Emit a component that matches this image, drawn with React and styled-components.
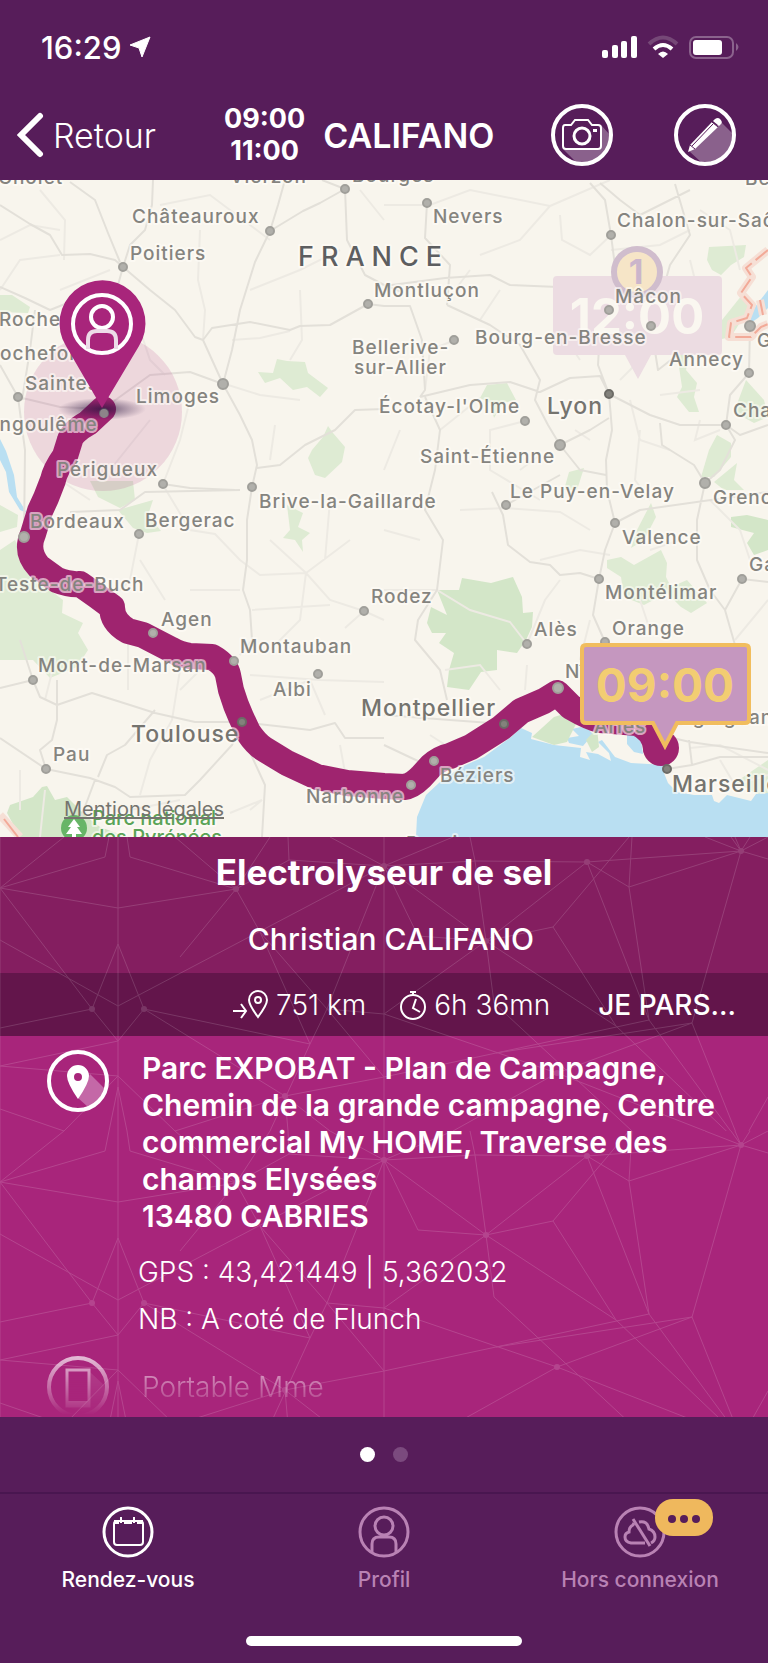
import styled, { createGlobalStyle } from "styled-components";

const cities = [
  { name: "Cholet", x: -2, y: 184 },
  { name: "Vierzon", x: 230, y: 183 },
  { name: "Bourges", x: 352, y: 182 },
  { name: "Besançon", x: 745, y: 185 },
  { name: "Châteauroux", x: 132, y: 223 },
  { name: "Nevers", x: 433, y: 223 },
  { name: "Chalon-sur-Saône", x: 617, y: 227 },
  { name: "Poitiers", x: 130, y: 260 },
  { name: "Montluçon", x: 374, y: 297 },
  { name: "Mâcon", x: 615, y: 303 },
  { name: "Rochelle", x: -1, y: 326 },
  { name: "Bourg-en-Bresse", x: 475, y: 344 },
  { name: "Genève", x: 757, y: 347 },
  { name: "Bellerive-", x: 352, y: 354 },
  { name: "sur-Allier", x: 354, y: 374 },
  { name: "Rochefort", x: -13, y: 360 },
  { name: "Annecy", x: 669, y: 366 },
  { name: "Saintes", x: 25, y: 390 },
  { name: "Limoges", x: 136, y: 403 },
  { name: "Écotay-l'Olme", x: 379, y: 413 },
  { name: "Chambéry", x: 733, y: 417 },
  { name: "Angoulême", x: -15, y: 431 },
  { name: "Saint-Étienne", x: 420, y: 463 },
  { name: "Périgueux", x: 57, y: 476 },
  { name: "Le Puy-en-Velay", x: 510, y: 498 },
  { name: "Grenoble", x: 713, y: 504 },
  { name: "Brive-la-Gaillarde", x: 259, y: 508 },
  { name: "Bordeaux", x: 30, y: 528 },
  { name: "Bergerac", x: 145, y: 527 },
  { name: "Valence", x: 622, y: 544 },
  { name: "Gap", x: 749, y: 571 },
  { name: "Teste-de-Buch", x: -5, y: 591 },
  { name: "Montélimar", x: 605, y: 599 },
  { name: "Rodez", x: 371, y: 603 },
  { name: "Agen", x: 161, y: 626 },
  { name: "Orange", x: 612, y: 635 },
  { name: "Alès", x: 534, y: 636 },
  { name: "Montauban", x: 240, y: 653 },
  { name: "Mont-de-Marsan", x: 38, y: 672 },
  { name: "Nîmes", x: 565, y: 678 },
  { name: "Albi", x: 273, y: 696 },
  { name: "Draguignan", x: 658, y: 724 },
  { name: "Arles", x: 594, y: 733 },
  { name: "Pau", x: 53, y: 761 },
  { name: "Béziers", x: 440, y: 782 },
  { name: "Narbonne", x: 306, y: 803 },
  { name: "Perpignan", x: 406, y: 850 },
];

const bigCities = [
  { name: "Lyon", x: 547, y: 414 },
  { name: "Montpellier", x: 361, y: 716 },
  { name: "Toulouse", x: 131, y: 742 },
  { name: "Marseille", x: 672, y: 792 },
];

// x, y, radius, dark
const dots = [
  [345, 189, 4], [270, 231, 4], [123, 267, 4], [368, 304, 4], [223, 384, 5],
  [18, 397, 4], [104, 413, 4], [163, 484, 4], [252, 487, 4], [427, 203, 4],
  [611, 235, 4], [609, 310, 4], [651, 326, 4], [454, 340, 4], [750, 326, 5],
  [749, 373, 4], [609, 394, 4, 1], [525, 421, 4], [560, 445, 5], [726, 425, 4],
  [705, 483, 5], [24, 537, 5], [139, 534, 4], [153, 633, 4], [234, 661, 4],
  [318, 674, 4], [33, 680, 4], [242, 722, 4, 1], [46, 769, 4], [364, 611, 4],
  [506, 505, 4], [615, 523, 4], [599, 579, 4], [742, 579, 4], [527, 644, 4],
  [605, 642, 4], [558, 688, 5], [504, 724, 4, 1], [434, 761, 4], [411, 785, 4],
  [667, 769, 4, 1],
];

const forests = [
  "0,295 12,295 30,307 28,313 0,312",
  "277,359 287,361 305,362 308,373 328,388 320,397 307,387 293,390 280,378 265,383 258,372 273,373",
  "328,426 333,433 345,447 342,462 325,478 315,475 308,458 312,450 323,437",
  "90,481 133,481 135,500 120,508 98,497",
  "118,510 153,500 148,515 161,531 147,533 133,528",
  "287,505 303,513 298,527 310,533 302,540 303,552 295,540 283,538 290,530",
  "0,550 15,540 30,570 50,590 63,600 62,613 83,623 78,633 88,650 77,667 50,678 33,660 0,660",
  "0,505 18,515 17,527 0,532",
  "651,503 656,517 644,540 631,548 637,530",
  "607,560 621,557 634,565 661,550 667,563 666,577 671,587 687,580 707,603 691,613 681,607 667,593 644,605 624,597 621,577 607,568",
  "709,247 746,245 744,257 731,265 721,275 712,270 707,260",
  "742,295 752,303 731,337 717,340 712,333 722,320",
  "677,347 692,345 686,370 697,383 694,397 699,412 689,412 677,397 682,387 679,367",
  "746,380 764,400 768,417 754,423 734,412",
  "717,435 731,443 731,457 714,477 701,477 709,450",
  "737,463 734,480 744,490 724,490 714,482",
  "487,385 507,383 516,400 503,403 494,418 490,403 480,398",
  "584,468 577,490 564,490 569,472",
  "736,782 768,760 768,800 750,790",
];

const parks = [
  "462,578 491,583 513,577 522,597 523,613 533,612 532,627 526,640 517,653 497,650 497,670 481,672 469,690 447,687 449,670 454,653 439,643 446,633 432,633 427,623 431,607 447,615 437,590 459,590",
  "7,813 10,805 33,797 42,787 47,786 55,800 67,797 87,817 100,827 127,837 20,837",
  "731,517 747,515 768,520 768,550 754,555 747,543 754,533 731,527",
  "532,737 554,717 567,713 577,722 567,742 554,745",
  "597,728 599,747 592,752 586,740",
];

const roads = `
  M0 205L30 224L50 235L62 255L90 254L115 260L123 267
  M153 180L152 205L145 230L130 245L123 267L118 285L100 290L50 310L25 298L0 287
  M70 182L95 200L108 233L120 262
  M123 267L150 290L175 310L195 337L203 340L223 384
  M285 180L278 205L270 231L255 262L250 278L240 310L232 350L223 384L240 415L252 440L257 465L252 487
  M270 231L303 211L320 203L345 189L322 180M345 189L347 240L365 275L384 285L402 292
  M203 340L212 328L250 322L290 330L300 326L330 325L368 304L384 306L410 306L422 340L425 390L420 397
  M257 468L280 465L305 445L335 430L355 410L384 409
  M163 484L190 488L235 490M252 487L247 520L247 560L243 590L250 610L252 640L240 655
  M18 397L60 407L103 409L150 375L190 372L223 384
  M0 365L18 397L25 450L24 537M35 310L30 350L22 400
  M427 203L425 238L450 265L447 305M384 286L445 278L490 275L510 285L558 287L580 305L609 310L651 326
  M447 305L490 325L520 345L540 380L535 400L548 425L560 445
  M420 397L470 385L510 382L540 392L570 378L600 376L609 394
  M590 183L605 200L611 235L618 290L600 330L598 365L609 394L612 430L606 460L607 490L615 523L605 550L599 579L593 615L605 642
  M675 184L690 235L670 265L660 300L651 326L658 370L690 345L720 330
  M609 394L650 415L680 425L726 425L740 435L768 425
  M560 445L590 430L609 418M660 423L662 445L694 465L705 483L720 470L735 440L726 425L730 395L749 373L750 326
  M560 445L580 470L606 475M506 505L533 490L560 475
  M425 397L440 430L435 470L425 510L443 540L437 590L418 620L415 640L440 670L447 700
  M492 492L503 515L508 545L530 562L550 565L560 575L580 573L599 579M615 523L640 510L768 492
  M705 483L697 520L697 560L710 590L725 610L735 645M742 579L725 610M742 579L768 582
  M504 724L450 720L384 715M384 745L420 762M660 735L690 742L768 753M689 740L692 765L667 769M692 765L720 757L768 757
  M0 688L33 680L40 697L57 705L92 693L130 705L155 713L195 722L242 722L285 727L310 730L335 723L345 738L384 738
  M57 680L57 720L52 740L40 750L46 769M0 738L46 769L90 778L115 787L130 797L185 795L200 780L232 745L242 722
  M95 780L80 820M98 777L107 755L125 745L155 710M242 735L265 785L262 837M33 680L20 640
  M70 512L120 510L145 492L240 490M600 183L620 200L640 215L690 190
`;

const minorRoads = `
  M0 240L30 225L60 230M40 190L65 220L64 260M0 290L20 260L60 255M60 290L110 270M160 205L210 195L270 240
  M200 230L198 280L205 310L203 340M250 290L300 270L340 250M300 290L302 340L290 360M232 340L260 338L290 331
  M130 300L150 360L165 375M360 190L384 220M384 205L430 205L470 190L550 206M550 206L520 240L480 255M550 206L610 180
  M560 215L562 240L590 255L611 235M470 270L455 290M500 290L480 320M611 250L660 245L690 230M700 210L730 230L740 270
  M690 260L700 300L705 330M560 300L555 340L590 350M455 340L430 350L425 390M480 398L440 430M525 421L490 430L490 470L540 500
  M560 330L580 360M630 400L640 440L670 450M660 395L700 390M640 360L620 380M400 430L384 470M300 400L260 395L225 384
  M275 425L270 460M150 420L110 470M163 484L180 440L190 400M60 480L90 500M139 534L130 580L110 600
  M163 485L190 530L215 534L240 560L260 575L306 573L350 540M140 560L165 600M190 590L240 590M306 573L330 600L364 611L384 620
  M270 540L306 573L300 620L270 650M252 610L330 605M330 500L325 560M384 530L420 540M364 611L345 628M250 675L320 680L384 682
  M260 700L310 680L325 715M128 640L128 690M180 670L172 720L150 760L140 795M205 665L180 690M45 700L55 660M20 770L20 810
  M45 790L40 837M130 810L180 800M250 810L262 800L230 813M340 745L350 800M384 590L437 590L470 610L510 622L527 644
  M445 670L480 665L500 690M527 644L545 600L560 580M460 510L506 508L560 512L590 530M540 560L580 550L610 555M640 600L650 630
  M768 600L735 640M710 500L740 530L750 560M650 550L680 540M590 620L580 660M527 665L525 690M605 642L600 660M690 748L720 745L768 770
  M720 760L735 785L768 775M430 735L450 748M700 420L695 440L720 430M640 430L635 480L650 500M590 440L575 430M540 455L520 470
`;

const route =
  "M103 409L88 423Q72 432 70 440L65 456Q55 470 53 480L46 498L40 511L33 534Q25 552 39 567L57 580Q70 585 80 584L97 596L112 607Q112 622 128 631L143 635L170 649Q180 655 190 656L212 657Q226 665 228 675L231 690L236 705L241 717L248 732Q256 744 264 749L287 763L317 777L347 783L384 786L404 787Q412 786 421 777L431 766Q440 758 450 756L471 747L501 728L521 711L544 701L557 693L571 707Q590 718 600 720L637 723Q654 730 656 748";

const mesh = `
  M0 0V294M118 0V294M384 0V294
  M0 51L64 0M0 51L105 20L109 0M127 0L130 20L236 52M0 51L118 71L236 52L289 23L384 29M289 23L288 0
  M0 51L92 172M0 103L118 169L384 29M118 107L92 172L118 204L144 172L118 107M92 172L0 191
  M144 172L310 207L260 95L236 52L270 0M236 52L175 0M236 52L180 120M260 95L327 172L384 177L486 104M384 29L327 172L310 207L270 294
  M384 29L418 99L486 104L553 90L629 0M384 29L475 24L587 25L741 14M384 29L486 104M475 24L486 104L616 189L553 90
  M587 25L486 104L494 166L632 294M587 25L629 50L741 14M629 50L649 183L587 25M741 14L692 186L741 308
  M384 29L330 0M384 29L453 0M475 24L470 0M629 50L632 0
  M384 240L496 216L649 183L741 308M692 186L557 236L384 177M557 236L453 294M557 236L741 308M616 189L741 308M692 186L496 216
  M144 172L285 259L384 240L327 172M285 259L330 294M285 259L288 294M285 259L175 294L118 239L64 294L0 272M118 239L0 229
  M118 204L0 229M118 250L109 294M118 250L127 294
  M741 14L705 0M741 14L731 0M741 14L735 0M741 14L750 0M741 14L768 0M741 14L768 22
  M741 308L768 260
`;

const meshNodes = [[92, 172], [144, 172], [236, 52], [384, 29], [486, 104], [557, 236], [587, 25], [741, 14], [285, 259]];

function TopoMap() {
  return (
    <MapSvg viewBox="0 180 768 657" role="img" aria-label="Itinéraire vers Marseille">
      <defs>
        <radialGradient id="shade">
          <stop offset="0" stopColor="#2b1640" stopOpacity=".75" />
          <stop offset=".5" stopColor="#2b1640" stopOpacity=".35" />
          <stop offset="1" stopColor="#2b1640" stopOpacity="0" />
        </radialGradient>
      </defs>
      <rect y="180" width="768" height="657" fill="#f8f5ed" />
      <g fill="#deebd3">{forests.map((p) => <polygon key={p} points={p} />)}</g>
      <g fill="#b9dff2">
        <path d="M416 837L417 817L426 795L440 782L461 767L484 757L511 737L521 728L532 733L531 739L554 745L581 748L580 757L590 760L586 752L598 754L611 761L609 753L598 742L602 740L615 757L631 763L666 765L664 773L668 783L677 792L694 795L712 795L714 801L719 803L727 795L751 801L756 794L768 793V837Z" />
        <path d="M567 738L579 736L572 729L581 727L589 730L597 738L589 739L583 746L569 743ZM627 735L640 733L643 754L634 752L627 744Z" />
        <path d="M0 439L6 451L14 475L17 497L27 513L20 510L9 492L6 472L0 460Z" />
        <path d="M768 290L752 311L749 324L758 318L768 308Z" />
      </g>
      <g fill="#d3e6c8">{parks.map((p) => <polygon key={p} points={p} />)}</g>
      <path d={minorRoads} fill="none" stroke="#edeae3" strokeWidth="2" />
      <path d={roads} fill="none" stroke="#e3e0d9" strokeWidth="2" strokeLinejoin="round" />
      <g fill="none" strokeLinejoin="round">
        <path d="M768 250L746 268L752 277L741 293L752 305L747 318L731 323L729 337L751 337L761 327L768 324M760 300L763 315M0 815L20 837" stroke="#f6dfd5" strokeWidth="8" />
        <path d="M768 250L746 268L752 277L741 293L752 305L747 318L731 323L729 337L751 337L761 327L768 324M760 300L763 315" stroke="#f2aa98" strokeWidth="2" strokeDasharray="16 5" />
        <path d="M4 819L18 837" stroke="#f2aa98" strokeWidth="2" />
      </g>

      <path d={route} fill="none" stroke="#9f246f" strokeWidth="26" strokeLinecap="round" strokeLinejoin="round" />
      <circle cx="661" cy="748" r="18" fill="#9f246f" />
      <circle cx="103" cy="412" r="79" fill="#a8257b" fillOpacity=".14" />

      {/* previous appointment, dimmed */}
      <path d="M557 276H718Q722 276 722 280V351Q722 355 718 355H651L638 379L625 355H557Q553 355 553 351V280Q553 276 557 276Z" fill="#ecdce2" />
      <BubbleText x="637" y="334" $color="#faf7f0" $wide>12:00</BubbleText>
      <circle cx="637" cy="272" r="23" fill="#f6e5c7" stroke="#d0bdcd" strokeWidth="6" />
      <StepText x="636" y="284">1</StepText>

      <g strokeWidth="2">
        {dots.map(([x, y, r, dark]) => (
          <circle key={`${x}-${y}`} cx={x} cy={y} r={r} fill={dark ? "#83827c" : "#b1b0ab"} stroke={dark ? "#6c6b66" : "#a09f9a"} />
        ))}
      </g>
      {cities.map((c) => <CityLabel key={c.name} x={c.x} y={c.y}>{c.name}</CityLabel>)}
      {bigCities.map((c) => <CityLabel key={c.name} x={c.x} y={c.y} $big>{c.name}</CityLabel>)}
      <CountryLabel x="298" y="266">FRANCE</CountryLabel>

      <circle cx="74" cy="828" r="13" fill="#67b567" />
      <path d="M74 819L80 827H77L82 834H76V838H72V834H66L71 827H68Z" fill="#fff" />
      <ParkLabel x="92" y="825">Parc national</ParkLabel>
      <ParkLabel x="92" y="844">des Pyrénées</ParkLabel>

      <ellipse cx="102" cy="409" rx="44" ry="11" fill="url(#shade)" />
      <path d="M102 408L66 346A43 43 0 1 1 139 346Z" fill="#a8257b" />
      <circle cx="104" cy="413" r="4" fill="#8d8489" />
      <g fill="none" stroke="#fff" strokeWidth="4">
        <circle cx="102" cy="324" r="29" />
        <circle cx="102" cy="317" r="11" />
        <path d="M88 349V340Q88 331 97 331H107Q116 331 116 340V349" stroke="#eddbe8" />
      </g>

      {/* current destination */}
      <path d="M586 645H745Q749 645 749 649V719Q749 723 745 723H677L665 746L653 723H586Q582 723 582 719V649Q582 645 586 645Z" fill="#c597bf" stroke="#f1bd5e" strokeWidth="4" />
      <BubbleText x="665" y="702" $color="#f2cd72">09:00</BubbleText>
    </MapSvg>
  );
}

function Mesh() {
  return (
    <MeshSvg aria-hidden="true">
      <defs>
        <pattern id="mesh" width="768" height="294" patternUnits="userSpaceOnUse">
          <path d={mesh} fill="none" stroke="#fff" strokeWidth="1" />
          {meshNodes.map(([x, y]) => <circle key={`${x}-${y}`} cx={x} cy={y} r="3" fill="#fff" />)}
        </pattern>
      </defs>
      <rect width="100%" height="100%" fill="url(#mesh)" />
    </MeshSvg>
  );
}

function CameraIcon() {
  return (
    <svg width="62" height="62" viewBox="0 0 62 62" fill="none">
      <path d="M50 21L59 31A28 28 0 0 1 26 59L12 45H50Z" fill="#8a618c" />
      <circle cx="31" cy="31" r="29" stroke="#fff" strokeWidth="4" />
      <path d="M14 21H20L24 16H37L41 21H47Q50 21 50 24V42Q50 45 47 45H15Q12 45 12 42V24Q12 21 14 21Z" stroke="#fff" strokeWidth="2" fill="#571d5a" />
      <circle cx="31" cy="32" r="8" stroke="#fff" strokeWidth="3" />
      <path d="M42 25H46V28H42Z" fill="#fff" />
    </svg>
  );
}

function PencilIcon() {
  return (
    <svg width="62" height="62" viewBox="0 0 62 62" fill="none">
      <path d="M47 18L58 29A28 28 0 0 1 28 59L15 47Z" fill="#8a618c" />
      <circle cx="31" cy="31" r="29" stroke="#fff" strokeWidth="4" />
      <path d="M14 48L16 41L38 18L44 23L21 45Z" fill="#fff" />
      <path d="M39 17L41 15Q44 13 46 15Q49 18 47 20L45 22Z" fill="#fff" />
      <path d="M39 20L18 42M38 18L44 23M16 41L21 45" stroke="#571d5a" strokeWidth="1" />
    </svg>
  );
}

function PlaceIcon() {
  return (
    <svg width="62" height="62" viewBox="0 0 62 62" fill="none">
      <path d="M43 24L57 38A28 28 0 0 1 41 57L31 48Z" fill="#c468a7" />
      <circle cx="31" cy="31" r="29" stroke="#fff" strokeWidth="4" />
      <path d="M31 49Q20 33 20 26A11 11 0 0 1 42 26Q42 33 31 49ZM31 23A4 4 0 1 0 31 31A4 4 0 1 0 31 23Z" fill="#fff" fillRule="evenodd" />
    </svg>
  );
}

function PhoneIcon() {
  return (
    <svg width="62" height="62" viewBox="0 0 62 62" fill="none">
      <path d="M43 16L58 30A28 28 0 0 1 40 58L20 51Z" fill="#fff" fillOpacity=".2" />
      <circle cx="31" cy="31" r="29" stroke="#fff" strokeWidth="4" />
      <path d="M20 14H42V50H20Z" stroke="#fff" strokeWidth="3" fill="#a8257b" />
      <path d="M20 45H42V50H20Z" fill="#fff" />
    </svg>
  );
}

function DistanceIcon() {
  return (
    <svg width="36" height="30" viewBox="0 0 36 30" fill="none" stroke="#fff" strokeWidth="2">
      <path d="M1 21H13M9 14L14 21L9 28" />
      <path d="M26 27Q17 15 17 10A9 9 0 0 1 35 10Q35 15 26 27Z" />
      <circle cx="26" cy="10" r="3" />
    </svg>
  );
}

function TimerIcon() {
  return (
    <svg width="26" height="30" viewBox="0 0 26 30" fill="none" stroke="#fff" strokeWidth="2">
      <circle cx="13" cy="17" r="12" />
      <path d="M13 5V2M10 2H16M16 9L13 18L20 22" />
    </svg>
  );
}

function CalendarIcon() {
  return (
    <svg width="52" height="52" viewBox="0 0 52 52" fill="none" stroke="currentColor">
      <circle cx="26" cy="26" r="24" strokeWidth="3" />
      <rect x="12" y="15" width="29" height="24" rx="3" strokeWidth="2" />
      <path d="M12 16H17M22 16H30M35 16H41" strokeWidth="4" />
      <path d="M19 11V17M32 11V17" strokeWidth="2" />
    </svg>
  );
}

function ProfileIcon() {
  return (
    <svg width="52" height="52" viewBox="0 0 52 52" fill="none" stroke="currentColor" strokeWidth="3">
      <circle cx="26" cy="26" r="24" />
      <circle cx="26" cy="20" r="9" />
      <path d="M14 46V38Q14 31 21 31H31Q38 31 38 38V46" />
    </svg>
  );
}

function OfflineIcon() {
  return (
    <svg width="52" height="52" viewBox="0 0 52 52" fill="none" stroke="currentColor" strokeWidth="3">
      <circle cx="26" cy="26" r="24" />
      <path d="M31 37H17Q11 36 11 31Q11 27 15 26Q15 21 19 19L20 17M25 16Q33 14 35 23Q41 25 41 31Q41 35 37 37" />
      <path d="M19 13L36 40" />
    </svg>
  );
}

export default function App() {
  return (
    <>
      <GlobalStyle />
      <Screen>
        <StatusBar>
          <Clock>16:29</Clock>
          <svg width="22" height="22" viewBox="0 0 22 22">
            <path d="M1 9L21 1L13 21L10 12Z" fill="#fff" stroke="#fff" strokeLinejoin="round" />
          </svg>
          <StatusIcons width="137" height="24" viewBox="0 0 137 24">
            <g fill="#fff">
              <rect y="15" width="6" height="8" rx="2" />
              <rect x="10" y="10" width="6" height="13" rx="2" />
              <rect x="19" y="6" width="6" height="17" rx="2" />
              <rect x="29" y="1" width="6" height="22" rx="2" />
              <path d="M61 23L56 19Q61 14 66 19Z" />
              <rect x="91" y="5" width="29" height="15" rx="3" />
            </g>
            <path d="M52 14Q61 6 70 14" fill="none" stroke="#fff" strokeWidth="4" />
            <path d="M47 9Q61 -4 75 9" fill="none" stroke="#754877" strokeWidth="4" />
            <rect x="88" y="2" width="43" height="21" rx="6" fill="none" stroke="#8b638d" strokeWidth="2" />
            <path d="M134 8Q139 12 134 16Z" fill="#8b638d" />
          </StatusIcons>
        </StatusBar>

        <NavBar>
          <BackButton>
            <svg width="27" height="46" viewBox="0 0 27 46" fill="none" stroke="#fff" strokeWidth="6" strokeLinecap="round">
              <path d="M23 4L4 23L23 42" strokeLinejoin="miter" />
            </svg>
            Retour
          </BackButton>
          <Slot>
            <time>09:00</time>
            <time>11:00</time>
          </Slot>
          <ClientName>CALIFANO</ClientName>
          <Actions>
            <IconButton aria-label="Prendre une photo"><CameraIcon /></IconButton>
            <IconButton aria-label="Modifier"><PencilIcon /></IconButton>
          </Actions>
        </NavBar>

        <MapArea>
          <TopoMap />
          <LegalLink href="#legal">Mentions légales</LegalLink>
        </MapArea>

        <Panel>
          <Mesh />
          <Summary>
            <Title>Electrolyseur de sel</Title>
            <Contact>Christian CALIFANO</Contact>
          </Summary>
          <TripBar>
            <Stat><DistanceIcon />751 km</Stat>
            <Stat><TimerIcon />6h 36mn</Stat>
            <LeaveButton>JE PARS...</LeaveButton>
          </TripBar>
          <Details>
            <DetailRow>
              <PlaceIcon />
              <Address>
                Parc EXPOBAT - Plan de Campagne, Chemin de la grande campagne, Centre commercial My HOME, Traverse des champs Elysées
                <br />
                13480 CABRIES
              </Address>
            </DetailRow>
            <Note>GPS : 43,421449 | 5,362032</Note>
            <Note>NB : A coté de Flunch</Note>
            <FadedRow>
              <PhoneIcon />
              <span>Portable Mme</span>
            </FadedRow>
          </Details>
        </Panel>

        <Pager>
          <PageDot $active aria-label="Page 1" />
          <PageDot aria-label="Page 2" />
        </Pager>

        <TabBar>
          <Tab href="#rendez-vous" $active>
            <CalendarIcon />
            Rendez-vous
          </Tab>
          <Tab href="#profil">
            <ProfileIcon />
            Profil
          </Tab>
          <Tab href="#hors-connexion">
            <BadgeAnchor>
              <OfflineIcon />
              <Badge><i /><i /><i /></Badge>
            </BadgeAnchor>
            Hors connexion
          </Tab>
        </TabBar>
        <HomeArea><HomeIndicator /></HomeArea>
      </Screen>
    </>
  );
}

const GlobalStyle = createGlobalStyle`
  * {
    box-sizing: border-box;
  }

  body {
    margin: 0;
    background: #571d5a;
    color: white;
    font-family: Inter, "Liberation Sans", sans-serif;
  }

  button {
    padding: 0;
    border: none;
    background: transparent;
    color: inherit;
    font-family: inherit;
    cursor: pointer;
  }

  svg {
    display: block;
    flex: none;
  }
`;

const Screen = styled.div`
  display: flex;
  flex-direction: column;
  background: #571d5a;
`;

const StatusBar = styled.div`
  display: flex;
  align-items: center;
  gap: 8px;
  height: 94px;
  padding: 0 29px 0 41px;
`;

const Clock = styled.span`
  font-size: 31px;
  font-weight: 500;
`;

const StatusIcons = styled.svg`
  margin-left: auto;
`;

const NavBar = styled.header`
  display: flex;
  align-items: center;
  height: 86px;
  padding: 0 32px 4px 17px;
`;

const BackButton = styled.button`
  display: flex;
  align-items: center;
  gap: 9px;
  margin-right: 68px;
  font-size: 34px;
  font-weight: 300;
`;

const Slot = styled.div`
  display: flex;
  flex-direction: column;
  align-items: center;
  font-size: 27px;
  font-weight: 700;
  line-height: 32px;
`;

const ClientName = styled.h1`
  margin: 0 0 0 18px;
  font-size: 34px;
  font-weight: 600;
`;

const Actions = styled.div`
  display: flex;
  gap: 61px;
  margin-left: auto;
`;

const IconButton = styled.button`
  border-radius: 50%;
`;

const MapArea = styled.section`
  position: relative;
  overflow: hidden;
`;

const MapSvg = styled.svg`
  width: 100%;
  height: auto;
`;

const CityLabel = styled.text`
  font-size: ${(p) => (p.$big ? 23 : 19)}px;
  font-weight: 500;
  letter-spacing: 1px;
  fill: ${(p) => (p.$big ? "#75746f" : "#85847f")};
  stroke: rgba(255, 253, 248, 0.6);
  stroke-width: 4px;
  stroke-linejoin: round;
  paint-order: stroke;
`;

const CountryLabel = styled(CityLabel)`
  font-size: 27px;
  letter-spacing: 7px;
  fill: #5d5e60;
`;

const ParkLabel = styled(CityLabel)`
  font-size: 20px;
  letter-spacing: 0;
  fill: #5aa356;
`;

const BubbleText = styled.text`
  font-size: ${(p) => (p.$wide ? 49 : 46)}px;
  font-weight: 700;
  text-anchor: middle;
  fill: ${(p) => p.$color};
`;

const StepText = styled(BubbleText)`
  font-size: 34px;
  fill: #cbb5cb;
`;

const LegalLink = styled.a`
  position: absolute;
  left: 64px;
  bottom: 16px;
  color: #75746f;
  font-size: 20px;
  line-height: 24px;
`;

const Panel = styled.main`
  position: relative;
  background: #a8257b;
`;

const MeshSvg = styled.svg`
  position: absolute;
  inset: 0;
  width: 100%;
  height: 100%;
  opacity: 0.14;
`;

const Summary = styled.div`
  display: flex;
  flex-direction: column;
  align-items: center;
  gap: 28px;
  height: 136px;
  padding-top: 15px;
  background: rgba(85, 22, 60, 0.43);
`;

const Title = styled.h2`
  margin: 0;
  font-size: 35px;
  font-weight: 700;
  line-height: 40px;
`;

const Contact = styled.p`
  margin: 0 0 0 14px;
  font-size: 30px;
  font-weight: 500;
  line-height: 38px;
`;

const TripBar = styled.div`
  display: flex;
  align-items: center;
  justify-content: flex-end;
  gap: 34px;
  height: 63px;
  padding: 0 32px;
  background: rgba(40, 8, 35, 0.54);
`;

const Stat = styled.span`
  display: flex;
  align-items: center;
  gap: 8px;
  font-size: 28px;
  font-weight: 300;
`;

const LeaveButton = styled.button`
  margin-left: 14px;
  font-size: 28px;
  font-weight: 500;
`;

const Details = styled.div`
  position: relative;
  height: 381px;
  padding: 14px 40px 0 47px;
  overflow: hidden;
`;

const DetailRow = styled.div`
  display: flex;
  gap: 33px;
`;

const Address = styled.address`
  font-size: 30px;
  font-style: normal;
  font-weight: 600;
  line-height: 37px;
`;

const Note = styled.p`
  margin: 9px 0 0 91px;
  font-size: 28px;
  font-weight: 300;
  line-height: 38px;

  ${DetailRow} + & {
    margin-top: 18px;
  }
`;

const FadedRow = styled(DetailRow)`
  align-items: center;
  margin-top: 18px;
  font-size: 28px;
  font-weight: 300;
  mask-image: linear-gradient(rgba(0, 0, 0, 0.7), transparent 95%);
`;

const Pager = styled.div`
  display: flex;
  align-items: center;
  justify-content: center;
  gap: 18px;
  height: 75px;
`;

const PageDot = styled.button`
  width: 15px;
  height: 15px;
  border-radius: 50%;
  background: ${(p) => (p.$active ? "white" : "#7b4a7e")};
`;

const TabBar = styled.nav`
  display: grid;
  grid-template-columns: repeat(3, 1fr);
  padding: 12px 0 32px;
  border-top: 2px solid #491650;
`;

const Tab = styled.a`
  display: flex;
  flex-direction: column;
  align-items: center;
  gap: 8px;
  color: ${(p) => (p.$active ? "white" : "#b982b4")};
  font-size: 21px;
  font-weight: 500;
  line-height: 28px;
  text-decoration: none;
`;

const BadgeAnchor = styled.span`
  position: relative;
`;

const Badge = styled.span`
  position: absolute;
  top: -7px;
  left: 41px;

  display: flex;
  align-items: center;
  justify-content: center;
  gap: 4px;
  width: 58px;
  height: 37px;
  padding-top: 2px;
  border-radius: 18px;
  background: #efb85d;

  i {
    width: 8px;
    height: 8px;
    border-radius: 50%;
    background: #571d5a;
  }
`;

const HomeArea = styled.div`
  display: flex;
  justify-content: center;
  padding: 10px 0 17px;
`;

const HomeIndicator = styled.div`
  width: 36%;
  height: 10px;
  border-radius: 5px;
  background: white;
`;
